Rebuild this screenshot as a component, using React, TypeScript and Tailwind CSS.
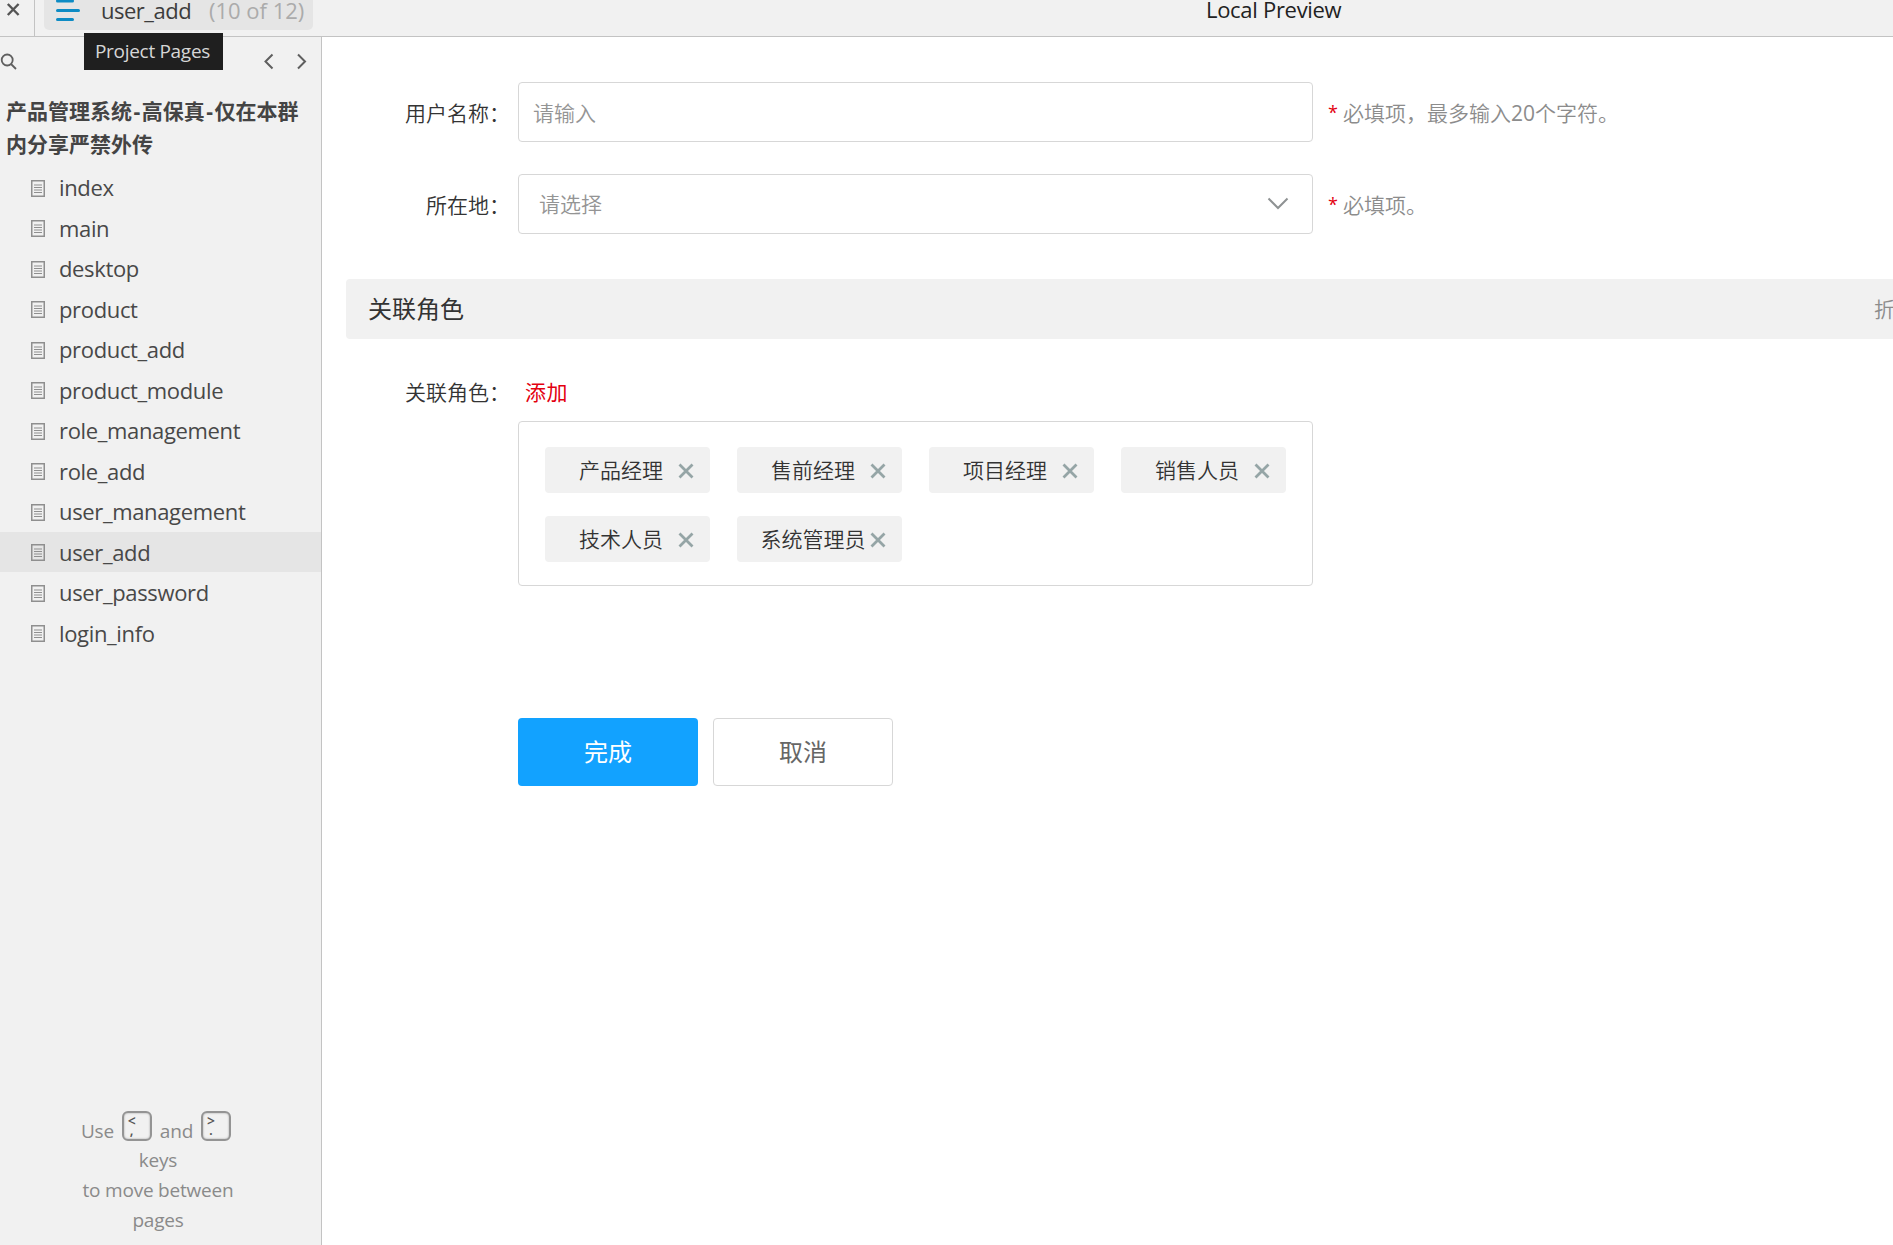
import type { ReactNode } from "react";

const pages = [
  "index",
  "main",
  "desktop",
  "product",
  "product_add",
  "product_module",
  "role_management",
  "role_add",
  "user_management",
  "user_add",
  "user_password",
  "login_info",
];

const currentPage = "user_add";

const roles = ["产品经理", "售前经理", "项目经理", "销售人员", "技术人员", "系统管理员"];

function PageIcon() {
  return (
    <svg width="14" height="17" viewBox="0 0 14 17" fill="none" stroke="#8f8f8f" className="mt-[2px] shrink-0">
      <rect x="0.75" y="0.75" width="12.5" height="15.5" strokeWidth="1.5" />
      <path d="M3 5h8M3 7.5h8M3 10h8M3 12.5h8" strokeWidth="1.1" />
    </svg>
  );
}

function Key({ top, bottom }: { top: string; bottom: string }) {
  return (
    <span className="mt-[1px] flex h-[30px] w-[30px] shrink-0 flex-col rounded-[6px] border-2 border-[#949494] pl-[4px] font-['Open_Sans',sans-serif] text-[14px] font-semibold text-[#555] shadow-[inset_0_0_2px_#999]">
      <span className="h-[13px] leading-[15px]">{top}</span>
      <span className="h-[10px] pl-[2px] leading-[8px]">{bottom}</span>
    </span>
  );
}

function TopBar() {
  return (
    <header className="flex h-[37px] shrink-0 border-b border-[#c3c3c3] bg-[#f1f1f1]">
      <div className="w-[35px] border-r border-[#c3c3c3]">
        <svg width="34" height="20" viewBox="0 0 34 20" stroke="#555" strokeWidth="2.4">
          <path d="M7.8 4l10.8 11M18.6 4L7.8 15" />
        </svg>
      </div>
      <div className="relative ml-[9px] flex h-[30px] w-[269px] rounded-b-[5px] bg-[#e5e5e5]">
        <svg width="25" height="24" viewBox="0 0 25 24" stroke="#0d8bc4" strokeWidth="3" strokeLinecap="round" className="ml-[12px]">
          <path d="M1.5 1H16.5M1.5 10.5H22.5M1.5 19.5H16.5" />
        </svg>
        <span className="ml-[20px] w-[108px] text-[22px] leading-[20px] tracking-[-0.5px] whitespace-nowrap text-[#3c3c3c]">user_add</span>
        <span className="text-[22px] leading-[20px] whitespace-nowrap text-[#ababab]">(10 of 12)</span>
        <div className="absolute top-[33px] left-[40px] z-10 flex h-[37px] w-[139px] items-center justify-center bg-[#1f1f1f] pr-[2px] text-[19px] tracking-[-0.3px] whitespace-nowrap text-[#d6d6d6]">
          Project Pages
        </div>
      </div>
      <div className="ml-[893px] text-[22px] leading-[18px] tracking-[-0.3px] whitespace-nowrap text-[#222]">Local Preview</div>
    </header>
  );
}

function Sidebar() {
  return (
    <aside className="flex w-[322px] shrink-0 flex-col border-r border-[#c3c3c3] bg-[#f1f1f1]">
      <div className="flex h-[54px] items-start justify-between pt-[16px] pr-[14px]">
        <svg width="18" height="18" viewBox="0 0 18 18" fill="none" stroke="#5f5f5f" strokeWidth="1.8">
          <circle cx="7.2" cy="7" r="5.5" />
          <path d="M11 11l5 5" />
        </svg>
        <svg width="44" height="18" viewBox="0 0 44 18" fill="none" stroke="#5f5f5f" strokeWidth="2">
          <path d="M9.5 1.5L2.5 8.5l7 7M35 1.5L42 8.5l-7 7" />
        </svg>
      </div>
      <h1 className="h-[76px] pt-[4px] pl-[6px] text-[21px] leading-[33px] font-bold whitespace-nowrap text-[#444]">
        产品管理系统<span className="px-[1.5px]">-</span>高保真<span className="px-[1.5px]">-</span>仅在本群
        <br />
        内分享严禁外传
      </h1>
      <ul>
        {pages.map((page) => (
          <li
            key={page}
            className={`flex h-[40.5px] items-center gap-[14px] pl-[31px] text-[22px] leading-[30px] tracking-[-0.35px] text-[#484848] ${
              page === currentPage ? "bg-[#e5e5e5]" : ""
            }`}
          >
            <PageIcon />
            {page}
          </li>
        ))}
      </ul>

      {/* Keyboard hint */}
      <div className="mt-auto mb-[10px] flex flex-col items-center pr-[5px] text-[19px] leading-[30px] tracking-[-0.2px] text-[#8a8a8a]">
        <div className="mr-[4px] flex h-[35px] gap-[8px]">
          <span className="pt-[6px]">Use</span>
          <Key top="<" bottom="," />
          <span className="pt-[6px]">and</span>
          <Key top=">" bottom="." />
        </div>
        <span>keys</span>
        <span>to move between</span>
        <span>pages</span>
      </div>
    </aside>
  );
}

function Field({ label, hint, children }: { label: string; hint: ReactNode; children: ReactNode }) {
  return (
    <div className="flex h-[60px] items-center text-[21px] font-[350]">
      <label className="w-[188px] pt-[3px] text-right text-[#333]">{label}</label>
      <div className="ml-[8px] flex h-[60px] w-[795px] items-center justify-between rounded-[4px] border border-[#d7d7d7] text-[#949494]">
        {children}
      </div>
      <span className="ml-[15px] w-[15px] text-[18px] font-normal text-[#e3000f]">*</span>
      <span className="pt-[3px] whitespace-nowrap text-[#8c8c8c]">{hint}</span>
    </div>
  );
}

function RoleTag({ name }: { name: string }) {
  return (
    <div className="flex h-[46px] w-[165px] items-center rounded-[4px] bg-[#f1f1f1]">
      <span className="ml-[23px] w-[106px] pt-[2px] text-center whitespace-nowrap">{name}</span>
      <svg width="16" height="16" viewBox="0 0 16 16" stroke="#95a5a6" strokeWidth="2.8" className="mt-[2px] ml-[4px]">
        <path d="M1.5 1.5l13 13M14.5 1.5l-13 13" />
      </svg>
    </div>
  );
}

function UserForm() {
  return (
    <main className="min-w-0 flex-1 overflow-hidden bg-white pt-[45px]">
      <Field
        label="用户名称："
        hint={
          <>
            必填项，最多输入<span className="font-normal">20</span>个字符。
          </>
        }
      >
        <span className="pt-[3px] pl-[14px]">请输入</span>
      </Field>
      <div className="h-[32px]" />
      <Field label="所在地：" hint="必填项。">
        <span className="pt-[1px] pl-[20px]">请选择</span>
        <svg width="22" height="14" viewBox="0 0 22 14" fill="none" stroke="#8e9293" strokeWidth="2" className="mr-[23px]">
          <path d="M1.5 1.5L11 11l9.5-9.5" />
        </svg>
      </Field>

      <div className="mt-[45px] ml-[24px] flex h-[60px] items-center justify-between rounded-l-[4px] bg-[#f1f1f1] pl-[22px]">
        <h2 className="text-[24px] text-[#333]">关联角色</h2>
        <span className="w-[19px] overflow-hidden pt-[2px] text-[21px] font-[350] whitespace-nowrap text-[#8c8c8c]">折叠</span>
      </div>

      <div className="mt-[38px] flex h-[32px] items-center text-[21px] font-[350]">
        <span className="w-[188px] text-right text-[#333]">关联角色：</span>
        <a className="ml-[15px] font-normal tracking-[0.5px] text-[#e3000f]">添加</a>
      </div>
      <div className="mt-[12px] ml-[196px] grid h-[165px] w-[795px] grid-cols-[repeat(4,165px)] content-start gap-x-[27px] gap-y-[23px] rounded-[4px] border border-[#d7d7d7] pt-[25px] pl-[26px] text-[21px] font-[350] text-[#333]">
        {roles.map((role) => (
          <RoleTag key={role} name={role} />
        ))}
      </div>

      <div className="mt-[132px] ml-[196px] flex gap-[15px] text-[24px]">
        <button className="h-[68px] w-[180px] rounded-[4px] bg-[#12a2ff] text-white">完成</button>
        <button className="h-[68px] w-[180px] rounded-[4px] border border-[#d7d7d7] text-[#666]">取消</button>
      </div>
    </main>
  );
}

export default function App() {
  return (
    <div className="flex h-[1245px] w-[1893px] flex-col overflow-hidden bg-white font-['Open_Sans','Noto_Sans_CJK_SC',sans-serif]">
      <TopBar />
      <div className="flex min-h-0 flex-1">
        <Sidebar />
        <UserForm />
      </div>
    </div>
  );
}
